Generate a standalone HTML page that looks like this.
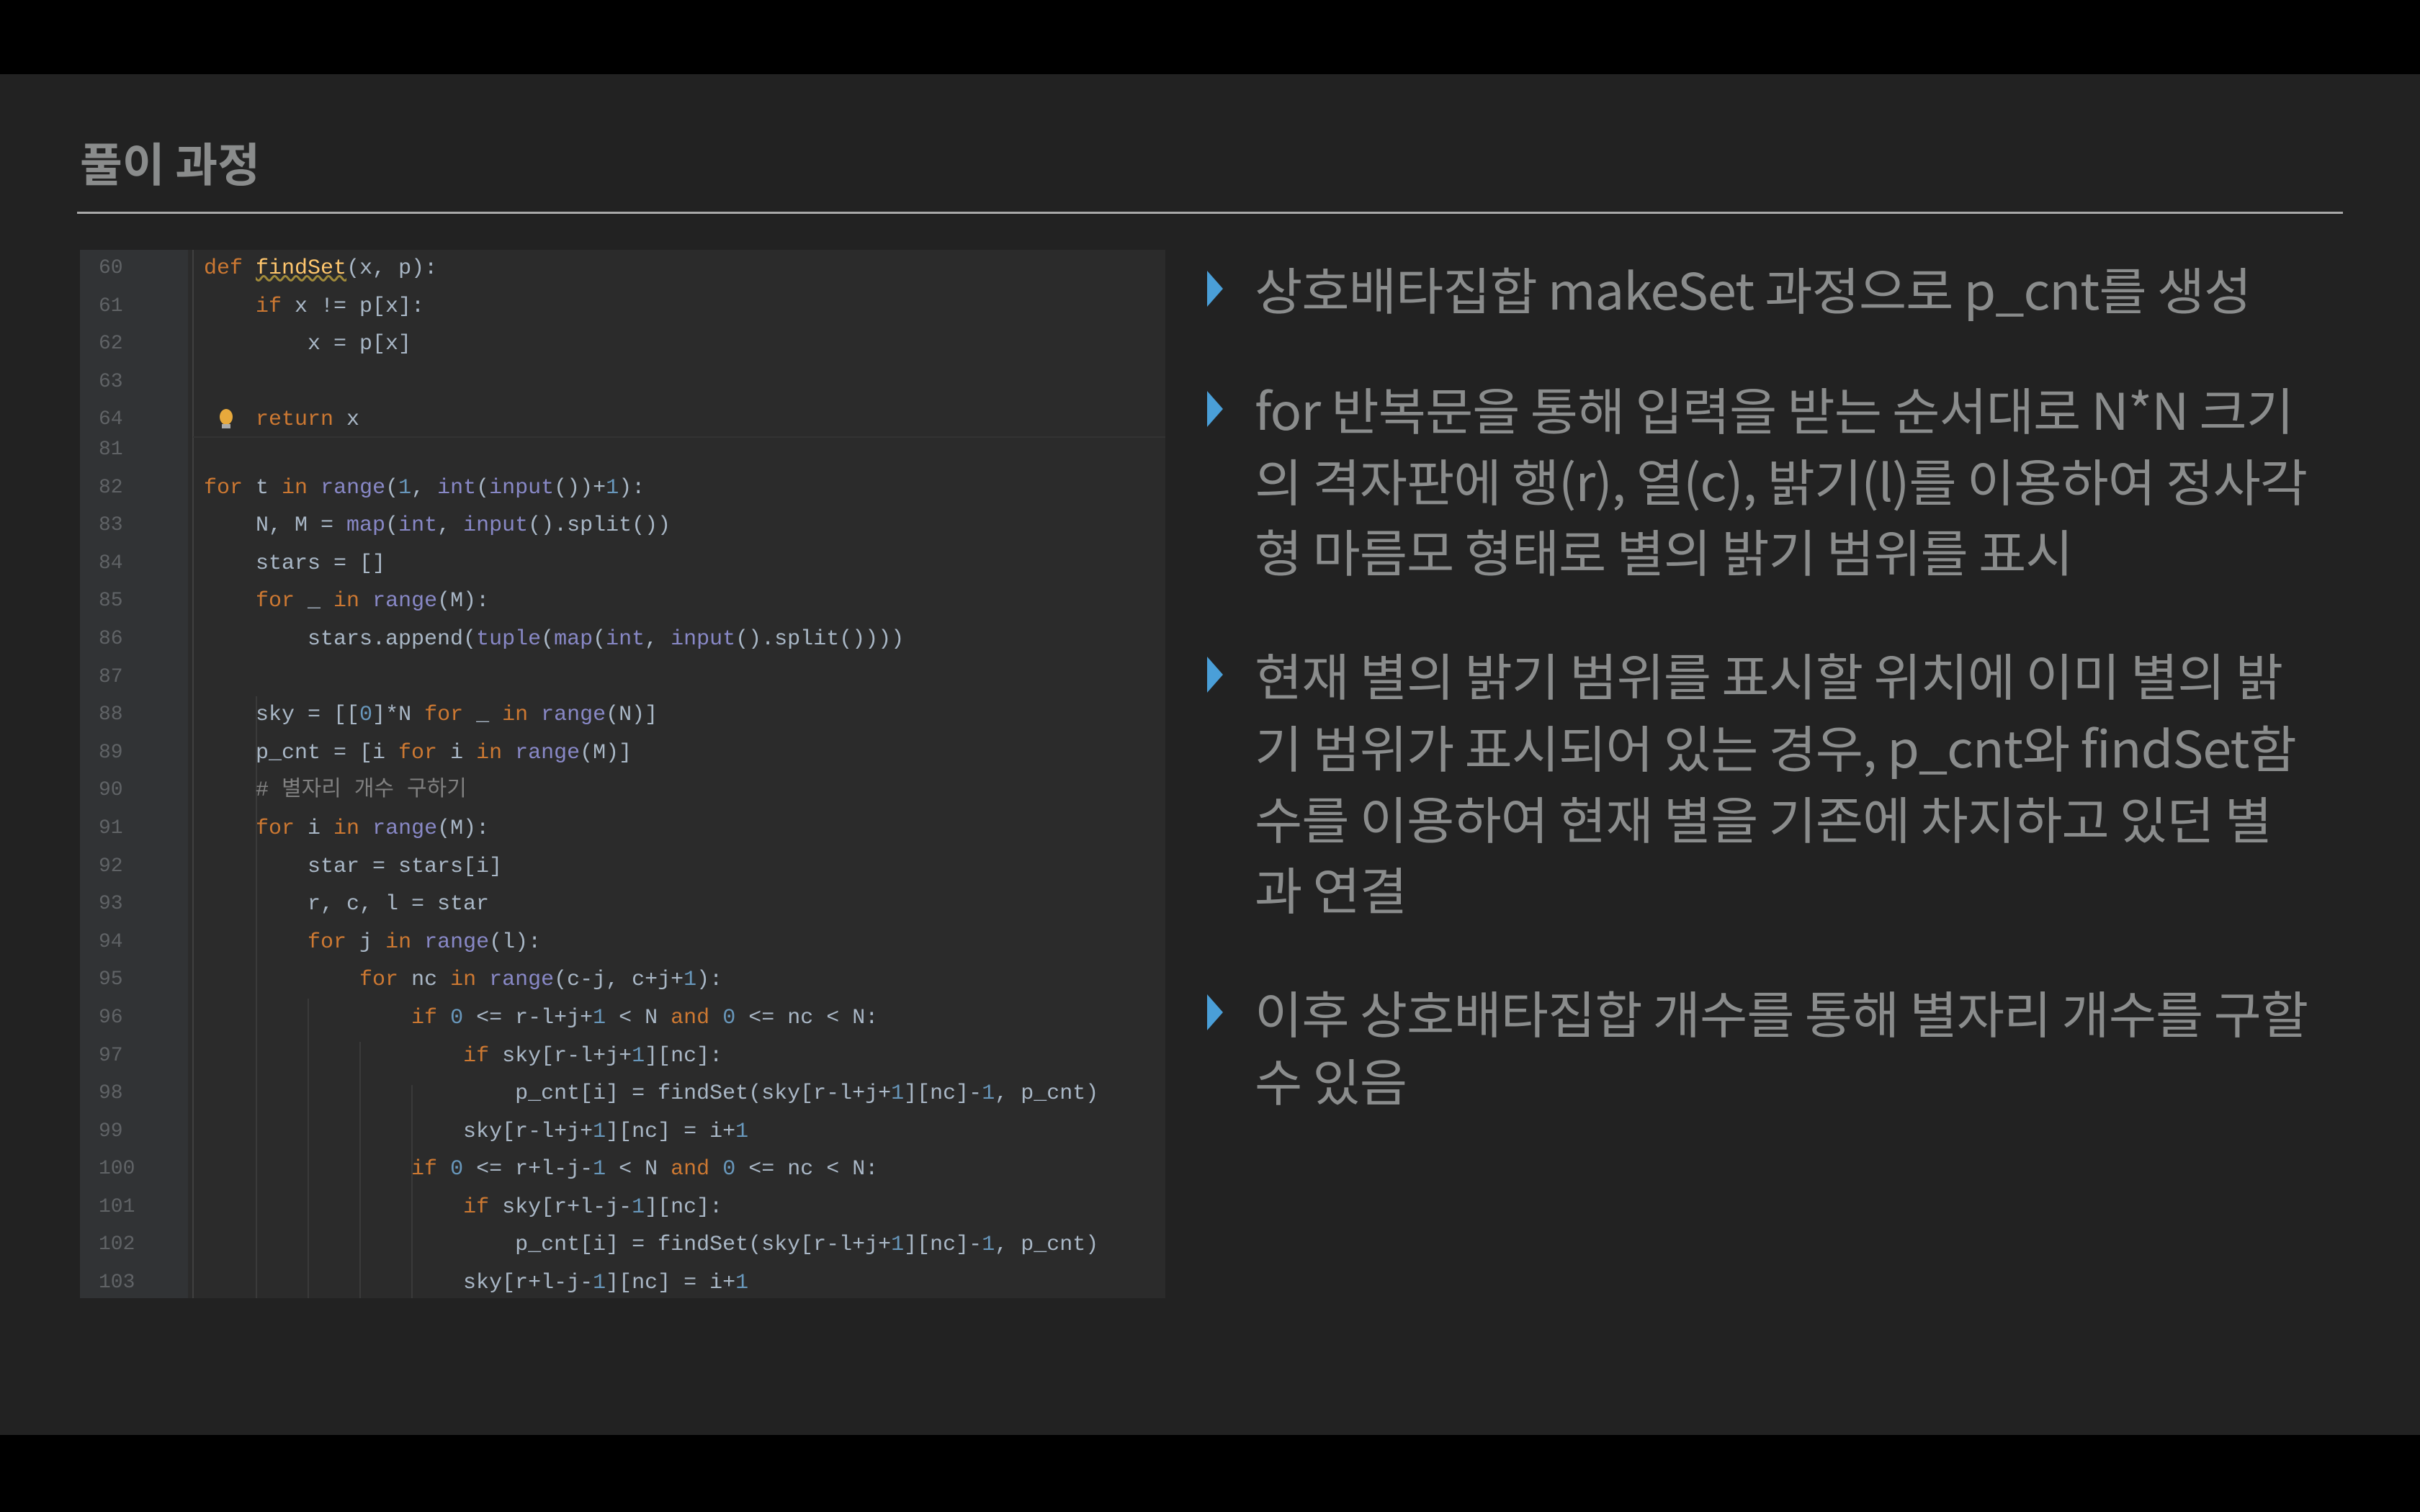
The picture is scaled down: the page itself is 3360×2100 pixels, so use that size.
<!DOCTYPE html>
<html><head><meta charset="utf-8"><style>
html,body{margin:0;padding:0}
body{width:3360px;height:2100px;background:#222222;position:relative;overflow:hidden;font-family:"Liberation Sans","Noto Sans CJK KR",sans-serif}
.bar{position:absolute;left:0;width:3360px;background:#000}
.title{position:absolute;left:111px;top:185px;font-size:64px;font-weight:bold;color:#8a8c8c;line-height:80px;font-family:"Noto Sans CJK KR",sans-serif;letter-spacing:0px}
.rule{position:absolute;left:107px;top:294px;width:3146px;height:3px;background:#a9a9a9}
.panel{position:absolute;left:111px;top:347px;width:1507px;height:1456px;background:#2b2b2b;overflow:hidden}
.gutter{position:absolute;left:0;top:0;width:150px;height:100%;background:#313335}
.fold{position:absolute;left:156px;top:0;width:2px;height:100%;background:#404040}
.guide{position:absolute;width:2px;background:#3a3a3a}
.code{position:absolute;left:0;font-family:"Liberation Mono",monospace;font-size:30px;line-height:52.6px;white-space:pre;color:#a9b7c6}
.ln{position:absolute;left:26px;width:60px;color:#606366;font-family:"Liberation Mono",monospace;font-size:28px;line-height:52.6px}
.k{color:#cc7832}.n{color:#6897bb}.b{color:#8888c6}.c{color:#808080}.f{color:#ffc66d}
.sep{position:absolute;left:157px;top:259px;width:1350px;height:2px;background:#333}
.line{position:absolute;left:1742px;height:100px;line-height:100px;font-size:70px;color:#8a8c8c;white-space:nowrap;font-family:"Noto Sans CJK KR",sans-serif;transform:scaleX(1.03);transform-origin:left center;letter-spacing:-1px}
.tri{position:absolute;left:1676px;width:0;height:0;border-top:25px solid transparent;border-bottom:25px solid transparent;border-left:22px solid #4a9fd8}
</style></head><body>
<div class="bar" style="top:0;height:103px"></div>
<div class="bar" style="top:1993px;height:107px"></div>
<div class="title">풀이 과정</div>
<div class="rule"></div>

<div class="panel">
<div class="gutter"></div>
<div class="fold"></div>
<div class="guide" style="left:244px;top:620px;height:836px"></div>
<div class="guide" style="left:316px;top:1040px;height:416px"></div>
<div class="guide" style="left:388px;top:1100px;height:356px"></div>
<div class="guide" style="left:460px;top:1160px;height:296px"></div>
<div class="sep"></div>
<div class="ln" style="top:0px">60<br>61<br>62<br>63<br>64</div>
<div class="code" style="left:172px;top:0px"><span class="k">def</span> <span class="f" style="text-decoration:underline wavy #a08a3a">findSet</span>(x, p):
    <span class="k">if</span> x != p[x]:
        x = p[x]

    <span class="k">return</span> x</div>
<div style="position:absolute;left:194px;top:221px;width:18px;height:22px;border-radius:50%;background:#e8a93c"></div>
<div style="position:absolute;left:197px;top:242px;width:12px;height:6px;background:#aaa"></div>
<div class="ln" style="top:252px">81<br>82<br>83<br>84<br>85<br>86<br>87<br>88<br>89<br>90<br>91<br>92<br>93<br>94<br>95<br>96<br>97<br>98<br>99<br>100<br>101<br>102<br>103</div>
<div class="code" style="left:172px;top:252px">
<span class="k">for</span> t <span class="k">in</span> <span class="b">range</span>(<span class="n">1</span>, <span class="b">int</span>(<span class="b">input</span>())+<span class="n">1</span>):
    N, M = <span class="b">map</span>(<span class="b">int</span>, <span class="b">input</span>().split())
    stars = []
    <span class="k">for</span> _ <span class="k">in</span> <span class="b">range</span>(M):
        stars.append(<span class="b">tuple</span>(<span class="b">map</span>(<span class="b">int</span>, <span class="b">input</span>().split())))

    sky = [[<span class="n">0</span>]*N <span class="k">for</span> _ <span class="k">in</span> <span class="b">range</span>(N)]
    p_cnt = [i <span class="k">for</span> i <span class="k">in</span> <span class="b">range</span>(M)]
    <span class="c"># 별자리 개수 구하기</span>
    <span class="k">for</span> i <span class="k">in</span> <span class="b">range</span>(M):
        star = stars[i]
        r, c, l = star
        <span class="k">for</span> j <span class="k">in</span> <span class="b">range</span>(l):
            <span class="k">for</span> nc <span class="k">in</span> <span class="b">range</span>(c-j, c+j+<span class="n">1</span>):
                <span class="k">if</span> <span class="n">0</span> &lt;= r-l+j+<span class="n">1</span> &lt; N <span class="k">and</span> <span class="n">0</span> &lt;= nc &lt; N:
                    <span class="k">if</span> sky[r-l+j+<span class="n">1</span>][nc]:
                        p_cnt[i] = findSet(sky[r-l+j+<span class="n">1</span>][nc]-<span class="n">1</span>, p_cnt)
                    sky[r-l+j+<span class="n">1</span>][nc] = i+<span class="n">1</span>
                <span class="k">if</span> <span class="n">0</span> &lt;= r+l-j-<span class="n">1</span> &lt; N <span class="k">and</span> <span class="n">0</span> &lt;= nc &lt; N:
                    <span class="k">if</span> sky[r+l-j-<span class="n">1</span>][nc]:
                        p_cnt[i] = findSet(sky[r-l+j+<span class="n">1</span>][nc]-<span class="n">1</span>, p_cnt)
                    sky[r+l-j-<span class="n">1</span>][nc] = i+<span class="n">1</span></div>
</div>

<div class="tri" style="top:376px"></div>
<div class="line" style="top:351px">상호배타집합 makeSet 과정으로 p_cnt를 생성</div>
<div class="tri" style="top:543px"></div>
<div class="line" style="top:518px">for 반복문을 통해 입력을 받는 순서대로 N*N 크기</div>
<div class="line" style="top:617px">의 격자판에 행(r), 열(c), 밝기(l)를 이용하여 정사각</div>
<div class="line" style="top:715px">형 마름모 형태로 별의 밝기 범위를 표시</div>
<div class="tri" style="top:912px"></div>
<div class="line" style="top:887px">현재 별의 밝기 범위를 표시할 위치에 이미 별의 밝</div>
<div class="line" style="top:987px">기 범위가 표시되어 있는 경우, p_cnt와 findSet함</div>
<div class="line" style="top:1086px">수를 이용하여 현재 별을 기존에 차지하고 있던 별</div>
<div class="line" style="top:1184px">과 연결</div>
<div class="tri" style="top:1381px"></div>
<div class="line" style="top:1356px">이후 상호배타집합 개수를 통해 별자리 개수를 구할</div>
<div class="line" style="top:1450px">수 있음</div>
</body></html>
